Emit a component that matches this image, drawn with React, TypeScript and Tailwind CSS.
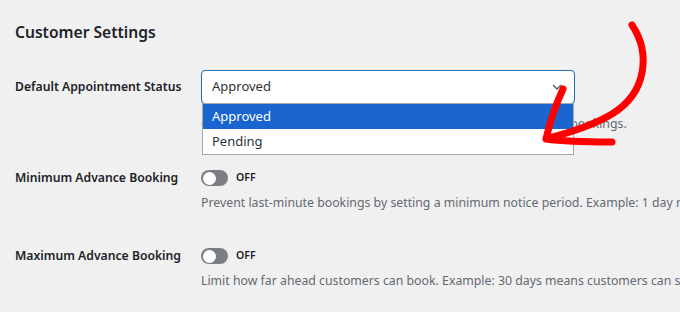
import React from 'react'

const font = { fontFamily: '"Noto Sans", "Open Sans", sans-serif' }

function Toggle() {
  return (
    <div className="flex items-center gap-[8px]">
      <div className="w-[27px] h-[16px] rounded-full bg-[#7b7e83] flex items-center pl-[2px]">
        <div className="w-[13px] h-[13px] rounded-full bg-white" />
      </div>
      <span className="text-[10.5px] font-semibold text-[#1d2327]">OFF</span>
    </div>
  )
}

function SettingRow({ label, desc }: { label: string; desc: string }) {
  return (
    <div className="flex flex-col">
      <div className="flex items-center h-[20px]">
        <div className="w-[186px] text-[12.2px] font-semibold text-[#1d2327]">{label}</div>
        <Toggle />
      </div>
      <p className="ml-[186px] mt-[5px] text-[12.3px] leading-[20px] text-[#646970] whitespace-nowrap">{desc}</p>
    </div>
  )
}

export default function App() {
  return (
    <div className="relative w-[680px] h-[312px] overflow-hidden bg-[#f0f0f1] pl-[15px] pt-[21px]" style={font}>
      <h2 className="text-[15.6px] leading-[22px] font-semibold text-[#1d2327]">Customer Settings</h2>

      {/* Default status select, shown opened */}
      <div className="flex flex-col mt-[27px]">
        <div className="flex items-center">
          <div className="w-[186px] text-[12.2px] font-semibold text-[#1d2327]">Default Appointment Status</div>
          <div className="relative">
            <div className="w-[374px] h-[34px] bg-white border border-[#2271b1] rounded-[4px] flex items-center justify-between pl-[10px] pr-[12px]">
              <span className="text-[13px] text-[#2c3338]">Approved</span>
              <svg width="10" height="6" viewBox="0 0 10 6" className="text-[#50575e]">
                <path d="M1 1l4 4 4-4" fill="none" stroke="currentColor" strokeWidth="1.3" />
              </svg>
            </div>
            <div className="absolute left-[1px] top-[33px] w-[372px] bg-white border border-[#a7aaad] z-10">
              <div className="h-[25px] bg-[#1a65cf] text-white text-[13px] flex items-center pl-[9px]">Approved</div>
              <div className="h-[25px] text-[#2c3338] text-[13px] flex items-center pl-[9px]">Pending</div>
            </div>
          </div>
        </div>
        <p className="ml-[186px] mt-[10px] text-[12.3px] leading-[20px] text-[#646970] whitespace-nowrap">
          Choose the status that is applied by default to all new customer bookings.
        </p>
      </div>

      <div className="flex flex-col gap-[33px] mt-[34px]">
        <SettingRow
          label="Minimum Advance Booking"
          desc="Prevent last-minute bookings by setting a minimum notice period. Example: 1 day means customers must book ahead."
        />
        <SettingRow
          label="Maximum Advance Booking"
          desc="Limit how far ahead customers can book. Example: 30 days means customers can schedule a month ahead."
        />
      </div>

      {/* hand-drawn red arrow */}
      <svg className="absolute left-0 top-0 z-20 pointer-events-none" width="680" height="312" viewBox="0 0 680 312">
        <path
          d="M632 25 C650 52 648 92 612 114 C592 126 568 133 549 138"
          fill="none" stroke="#ff0000" strokeWidth="7" strokeLinecap="round"
        />
        <path
          d="M563 89 C556 104 550 121 546 139 C566 142 590 142 612 142"
          fill="none" stroke="#ff0000" strokeWidth="7" strokeLinecap="round" strokeLinejoin="round"
        />
      </svg>
    </div>
  )
}
